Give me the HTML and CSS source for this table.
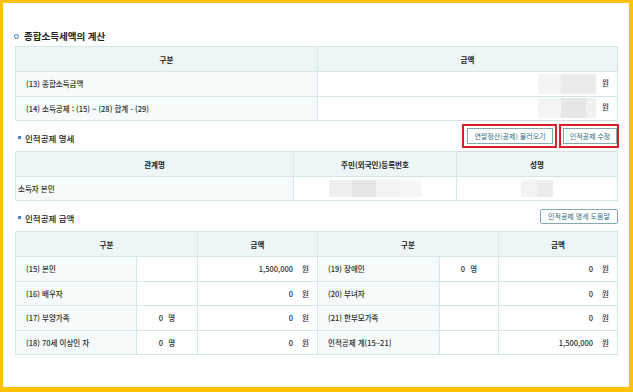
FILE: index.html
```html
<!DOCTYPE html>
<html lang="ko">
<head>
<meta charset="utf-8">
<link rel="stylesheet" href="styles.css">
</head>
<body>
<div class="panel">
  <div class="title"><span class="ring"></span>종합소득세액의 계산</div>
  <table class="tbl t1">
    <colgroup><col class="c302"><col></colgroup>
    <tr><th>구분</th><th>금액</th></tr>
    <tr><td class="lbl">(13) 종합소득금액</td><td class="amt"><span class="blur"><i class="g1 w23"></i><i class="g2 w35"></i></span><span class="won">원</span></td></tr>
    <tr><td class="lbl">(14) 소득공제 : (15) ~ (28) 합계 - (29)</td><td class="amt"><span class="blur"><i class="g3 w23"></i><i class="g4 w25"></i><i class="g5 w10"></i></span><span class="won">원</span></td></tr>
  </table>

  <div class="sechead">
    <div class="sub"><span class="dot"></span>인적공제 명세</div>
    <div class="btns">
      <div class="mark m1"><span class="btn b1">연말정산(공제) 불러오기</span></div>
      <div class="mark m2"><span class="btn b2">인적공제 수정</span></div>
    </div>
  </div>
  <table class="tbl t2">
    <colgroup><col class="c278"><col class="c163"><col></colgroup>
    <tr><th>관계명</th><th>주민(외국인)등록번호</th><th>성명</th></tr>
    <tr><td class="lbl tight">소득자 본인</td><td class="ctr"><span class="blur b17"><i class="g6 w23"></i><i class="g4 w24"></i><i class="g1 w24"></i><i class="g7 w22"></i></span></td><td class="ctr"><span class="blur b17"><i class="g1 w16"></i><i class="g2 w16"></i></span></td></tr>
  </table>

  <div class="sechead">
    <div class="sub"><span class="dot"></span>인적공제 금액</div>
    <span class="btn b3">인적공제 명세 도움말</span>
  </div>
  <table class="tbl t3">
    <colgroup><col class="c121"><col class="c61"><col class="c120"><col class="c122"><col class="c59"><col></colgroup>
    <tr><th colspan="2">구분</th><th>금액</th><th colspan="2">구분</th><th>금액</th></tr>
    <tr><td class="lbl">(15) 본인</td><td></td><td class="amt">1,500,000<span class="won">원</span></td><td class="lbl">(19) 장애인</td><td class="ctr">0 <span class="unit">명</span></td><td class="amt">0<span class="won">원</span></td></tr>
    <tr><td class="lbl">(16) 배우자</td><td></td><td class="amt">0<span class="won">원</span></td><td class="lbl">(20) 부녀자</td><td></td><td class="amt">0<span class="won">원</span></td></tr>
    <tr><td class="lbl">(17) 부양가족</td><td class="ctr">0 <span class="unit">명</span></td><td class="amt">0<span class="won">원</span></td><td class="lbl">(21) 한부모가족</td><td></td><td class="amt">0<span class="won">원</span></td></tr>
    <tr><td class="lbl">(18) 70세 이상인 자</td><td class="ctr">0 <span class="unit">명</span></td><td class="amt">0<span class="won">원</span></td><td class="lbl">인적공제 계(15~21)</td><td></td><td class="amt">1,500,000<span class="won">원</span></td></tr>
  </table>
</div>
</body>
</html>
```

FILE: styles.css
```css
html, body { margin: 0; padding: 0; }
body {
  background: #fcc200;
  font-family: "Noto Sans CJK KR", "Noto Sans", sans-serif;
  color: #333;
  height: 392px;
  overflow: hidden;
}
.panel {
  background: #fff;
  margin: 3px 4px 0 3px;
  height: 384px;
  box-sizing: border-box;
  padding: 26px 11px 0 12px;
}
.title {
  display: flex;
  align-items: center;
  height: 14px;
  margin-bottom: 3px;
  font-size: 9.5px;
  font-weight: 700;
  color: #222;
}
.ring {
  width: 3px;
  height: 3px;
  border: 1.8px solid #3a7dd1;
  border-radius: 50%;
  margin: 0 5px 0 -1px;
}
.tbl {
  width: 100%;
  border-collapse: collapse;
  table-layout: fixed;
  font-size: 7.5px;
}
.tbl th, .tbl td {
  border: 1px solid #d4e6e8;
  padding: 0 10px;
  white-space: nowrap;
}
.tbl th {
  background: #ecf6f6;
  font-weight: 700;
  height: 24px;
  text-align: center;
  color: #222;
}
.tbl td { height: 23.5px; background: #fff; font-weight: 500; color: #2a2a2a; }
.tbl td.lbl { background: #f5fafa; }
.tbl td.tight { padding-left: 2px; }
.tbl td.ctr { text-align: center; }
.tbl td.amt { text-align: right; padding-right: 8px; }
.unit { margin-left: 3px; }
.t2 td { height: 23px; }
.c302 { width: 302px; }
.c278 { width: 278px; }
.c163 { width: 163px; }
.c121 { width: 121px; }
.c61 { width: 61px; }
.c120 { width: 120px; }
.c122 { width: 122px; }
.c59 { width: 59px; }
.won { margin-left: 9px; }
.blur {
  display: inline-flex;
  vertical-align: middle;
  height: 20px;
}
.blur.b17 { height: 17px; }
.blur i { display: block; height: 100%; }
.g1 { background: #f3f3f3; }
.g2 { background: #ececec; }
.g3 { background: #f5f5f5; }
.g4 { background: #e6e6e6; }
.g5 { background: #f0f0f0; }
.g6 { background: #efefef; }
.g7 { background: #f7f7f7; }
.w10 { width: 10px; }
.w16 { width: 16px; }
.w22 { width: 22px; }
.w23 { width: 23px; }
.w24 { width: 24px; }
.w25 { width: 25px; }
.w35 { width: 35px; }
.t1 .won { margin-left: 6px; }
.sechead {
  display: flex;
  align-items: center;
  justify-content: space-between;
  height: 30px;
}
.sub {
  display: flex;
  align-items: center;
  font-size: 8.5px;
  font-weight: 500;
  color: #222;
  padding-top: 3px;
}
.dot {
  width: 3px;
  height: 3px;
  background: #4b7fc4;
  margin: 0 4px 0 3px;
}
.btns { display: flex; gap: 2px; margin-right: -1px; }
.mark {
  display: flex;
  border: 2px solid #d8202a;
  box-sizing: border-box;
}
.m1 { padding: 2px 2px 1px 3px; }
.m2 { padding: 2px 0 2px 2px; }
.btn {
  display: flex;
  align-items: center;
  justify-content: center;
  box-sizing: border-box;
  border: 1px solid #86a9b0;
  background: #fff;
  color: #2e6e7e;
  font-size: 7px;
  height: 16px;
  white-space: nowrap;
}
.b1 { width: 86px; }
.b2 { width: 54px; }
.b3 { width: 78px; height: 15px; border-radius: 2px; }
```
